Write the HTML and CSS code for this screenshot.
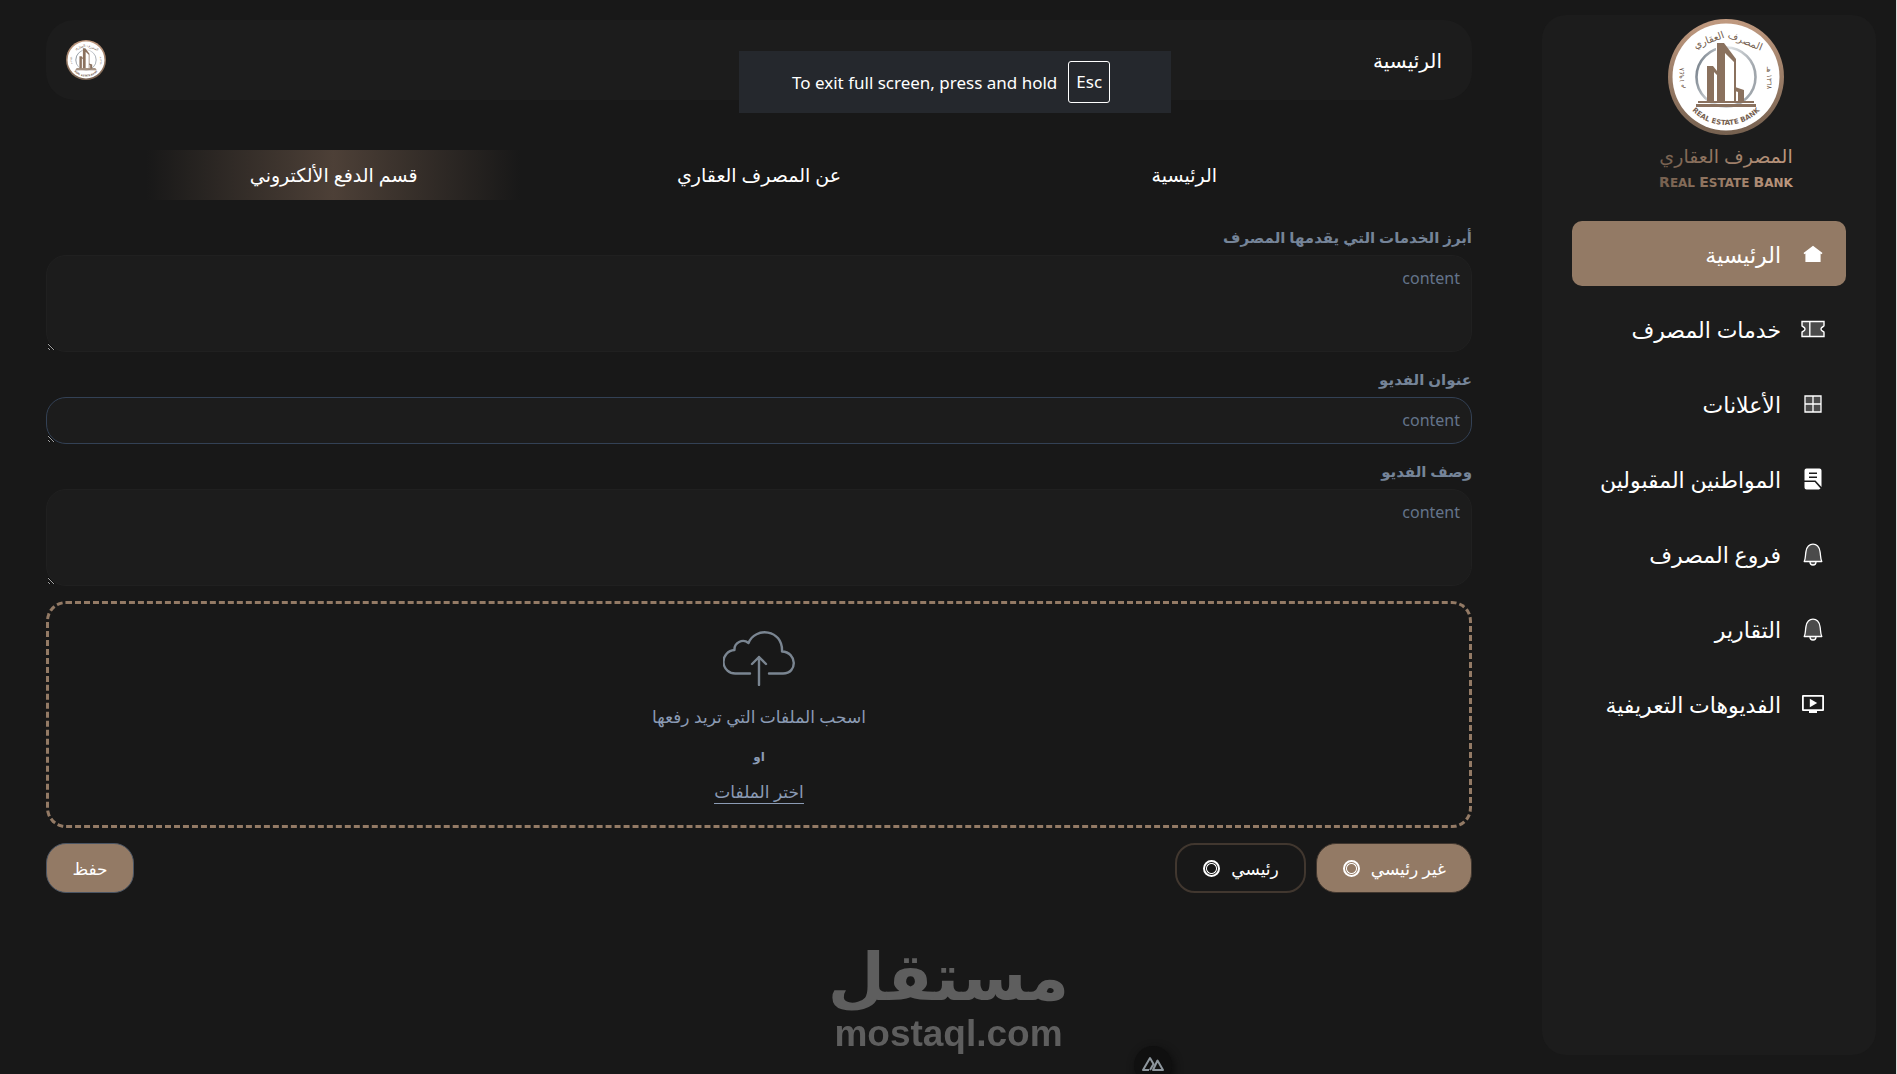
FILE: index.html
```html
<!DOCTYPE html>
<html lang="ar" dir="rtl">
<head>
    <meta charset="UTF-8">
    <meta name="viewport" content="width=device-width, initial-scale=1.0">
    <title>المصرف العقاري</title>
    <link rel="stylesheet" href="styles.css">
</head>
<body>

    <div class="layout">
        <!-- Sidebar -->
        <aside class="sidebar">
            <svg class="logo" viewBox="0 0 140 180" direction="ltr" role="img" aria-label="Real Estate Bank">
                <defs>
                    <linearGradient id="bronze" x1="0" y1="0" x2="0" y2="1">
                        <stop offset="0" stop-color="#c19a80"/>
                        <stop offset="1" stop-color="#75604f"/>
                    </linearGradient>
                    <linearGradient id="bronze-text" x1="0" y1="0" x2="1" y2="0">
                        <stop offset="0" stop-color="#75604f"/>
                        <stop offset="1" stop-color="#c09a80"/>
                    </linearGradient>
                    <linearGradient id="silver" x1="0" y1="0" x2="1" y2="0.3">
                        <stop offset="0" stop-color="#66717c"/>
                        <stop offset="0.5" stop-color="#dfe2e5"/>
                        <stop offset="1" stop-color="#a0a6ac"/>
                    </linearGradient>
                    <path id="seal-bottom" d="M27 82 A47 47 0 0 0 113 82"/>
                    <g id="seal">
                        <circle cx="70" cy="62" r="58" fill="url(#bronze)"/>
                        <circle cx="70" cy="62" r="53.5" fill="#fff"/>
                        <circle cx="70" cy="62" r="29.5" fill="none" stroke="url(#silver)" stroke-width="2.6"/>
                        <path d="M60 29h8v56h-8z" fill="#fff"/>
                        <path d="M61 28h7l12 16v42h-2V47l-9-9v48h-8z" fill="#8a715e"/>
                        <path d="M51 51h6l4 5v4l-3-3v29h-7zM79 72l9 3v11h-6V77l-3-1z" fill="#8a715e"/>
                        <path d="M42 86h56v2H42zM40 89h60v3H40z" fill="#8a715e"/>
                        <g fill="#75604f" text-anchor="middle">
                            <text class="seal-arabic" x="88" y="29" transform="rotate(22 88 29)">المصرف</text>
                            <text class="seal-arabic" x="54" y="28" transform="rotate(-20 54 28)">العقاري</text>
                            <text class="seal-year" transform="translate(28 63) rotate(-90)">١٩٤٨ م</text>
                            <text class="seal-year" transform="translate(111 63) rotate(90)">١٣٦٨ هـ</text>
                            <text class="seal-latin"><textPath href="#seal-bottom" startOffset="50%">REAL ESTATE BANK</textPath></text>
                        </g>
                    </g>
                </defs>
                <use href="#seal"/>
                <text class="logo-arabic" x="70" y="148" text-anchor="middle" fill="url(#bronze-text)">المصرف العقاري</text>
                <text class="logo-latin" x="70" y="172" text-anchor="middle" fill="url(#bronze-text)"><tspan class="cap">R</tspan>EAL <tspan class="cap">E</tspan>STATE <tspan class="cap">B</tspan>ANK</text>
            </svg>

            <nav class="menu">
                <a href="#" class="menu-item active">
                    <svg viewBox="0 0 24 24" fill="currentColor"><path d="M12 3.800 2.500 11l1 1.200.9-.6V20h15.200v-8.400l.9.6 1-1.200z"/></svg>
                    <span>الرئيسية</span>
                </a>
                <a href="#" class="menu-item">
                    <svg viewBox="0 0 24 24" fill="#4b4b4b" stroke="currentColor" stroke-width="1.400"><path d="M1 4.500h22v4a1 1 0 0 1-.8 1c-3 1.500-3 3.500 0 5a1 1 0 0 1 .8 1v4H1v-4a1 1 0 0 1 .8-1c3-1.500 3-3.500 0-5a1 1 0 0 1-.8-1z"/><path d="M8.800 4.500v15"/></svg>
                    <span>خدمات المصرف</span>
                </a>
                <a href="#" class="menu-item">
                    <svg viewBox="0 0 24 24" fill="#4b4b4b" stroke="currentColor" stroke-width="1.300"><path d="M4 4h16v16H4zM12 4v16M4 12h16"/></svg>
                    <span>الأعلانات</span>
                </a>
                <a href="#" class="menu-item">
                    <svg viewBox="0 0 24 24" fill="currentColor"><path fill-rule="evenodd" d="M3.500 3.500A2 2 0 0 1 5.500 1.500h13a2 2 0 0 1 2 2V20l-6-6.500h-11zM8 5.500V7h8V5.500zM8 9.500V11h8V9.500z"/><path d="M3.500 15h10.300l5.700 6.500-1.500 1H5.500a2 2 0 0 1-2-2z"/></svg>
                    <span>المواطنين المقبولين</span>
                </a>
                <a href="#" class="menu-item">
                    <svg viewBox="0 0 24 24" fill="#4b4b4b" stroke="currentColor" stroke-width="1.300" stroke-linejoin="round"><path d="M9 20a3 3 0 0 0 6 0"/><path d="M3.200 19.500c1.500-2.500 1-6 1.800-10 .8-4.500 3.500-7.300 7-7.300s6.200 2.800 7 7.300c.8 4 .3 7.500 1.800 10z"/></svg>
                    <span>فروع المصرف</span>
                </a>
                <a href="#" class="menu-item">
                    <svg viewBox="0 0 24 24" fill="#4b4b4b" stroke="currentColor" stroke-width="1.300" stroke-linejoin="round"><path d="M9 20a3 3 0 0 0 6 0"/><path d="M3.200 19.500c1.500-2.500 1-6 1.800-10 .8-4.500 3.500-7.300 7-7.300s6.200 2.800 7 7.300c.8 4 .3 7.500 1.800 10z"/></svg>
                    <span>التقارير</span>
                </a>
                <a href="#" class="menu-item">
                    <svg viewBox="0 0 24 24" fill="currentColor"><path fill-rule="evenodd" d="M2 3h20a1 1 0 0 1 1 1v14a1 1 0 0 1-1 1h-6v2H8v-2H2a1 1 0 0 1-1-1V4a1 1 0 0 1 1-1zm.800 1.800v12.400h18.400V4.800z"/><path d="m8.800 6.800 7.400 4.200-7.400 4.200z"/></svg>
                    <span>الفديوهات التعريفية</span>
                </a>
            </nav>
        </aside>

        <!-- Page content -->
        <main class="content">
            <header class="topbar">
                <h1>الرئيسية</h1>
                <a href="#" class="avatar" aria-label="الحساب">
                    <svg viewBox="12 4 116 116"><use href="#seal"/></svg>
                </a>
            </header>

            <div class="tabs">
                <button type="button" class="tab">الرئيسية</button>
                <button type="button" class="tab">عن المصرف العقاري</button>
                <button type="button" class="tab active">قسم الدفع الألكتروني</button>
            </div>

            <form class="form">
                <div class="field">
                    <label for="services">أبرز الخدمات التي يقدمها المصرف</label>
                    <textarea id="services" rows="3" placeholder="content"></textarea>
                </div>
                <div class="field">
                    <label for="video-title">عنوان الفديو</label>
                    <textarea id="video-title" class="single" rows="1" placeholder="content"></textarea>
                </div>
                <div class="field">
                    <label for="video-desc">وصف الفديو</label>
                    <textarea id="video-desc" rows="3" placeholder="content"></textarea>
                </div>

                <div class="dropzone">
                    <svg class="cloud" viewBox="0 0 72 56" fill="none" stroke="#7a8591" stroke-width="2.400" stroke-linecap="round" stroke-linejoin="round">
                        <path d="M27 43.500H13A11.500 11.500 0 0 1 11.500 20C11 13 19.500 8 25.500 13 32-3.500 60-1 59 21.500 74 22 75 43.500 60 43.500H46"/>
                        <path d="M36 55V27M29 34l7-7 7 7"/>
                    </svg>
                    <p>اسحب الملفات التي تريد رفعها</p>
                    <small>او</small>
                    <a href="#">اختر الملفات</a>
                </div>

                <div class="actions">
                    <label class="choice selected">غير رئيسي <input type="radio" name="kind" checked></label>
                    <label class="choice">رئيسي <input type="radio" name="kind"></label>
                    <button type="button" class="save">حفظ</button>
                </div>
            </form>
        </main>
    </div>

    <!-- Overlays -->
    <div class="fullscreen-hint" dir="ltr">To exit full screen, press and hold <kbd>Esc</kbd></div>

    <div class="watermark" dir="ltr">
        <span class="watermark-arabic" lang="ar">مستقل</span>
        <span class="watermark-latin">mostaql.com</span>
    </div>

    <button type="button" class="devtools" aria-label="Nuxt DevTools">
        <svg viewBox="0 0 24 16" fill="none" stroke="#8e979e" stroke-width="2" stroke-linejoin="round"><path d="M8 14H2L9 2l3.500 6L9 14M12 14h10l-5.500-9.500z"/></svg>
    </button>

</body>
</html>
```
FILE: styles.css
```css
/* General styles */
* {
    box-sizing: border-box;
}

body {
    margin: 0;
    height: 100vh;
    overflow: hidden;
    border-right: 1px solid #dcdcdc;
    background: #181818;
    color: #fff;
    font-family: "Noto Sans", "DejaVu Sans", sans-serif;
    font-size: 16px;
}

button,
textarea {
    font-family: inherit;
}

.layout {
    display: flex;
    gap: 70px;
    padding: 15px 20px 19px 46px;
    min-height: 100vh;
}

/* Sidebar */
.sidebar {
    flex: 0 0 334px;
    background: #1c1c1c;
    border-radius: 24px;
    padding: 0 30px;
}

.logo {
    display: block;
    width: 140px;
    height: 180px;
    margin: 0 50px 26px 0;
    overflow: visible;
}

.logo-arabic {
    font-size: 19px;
}

.logo-latin {
    font-family: "DejaVu Sans", sans-serif;
    font-size: 12px;
    font-weight: bold;
}

.logo-latin .cap {
    font-size: 14px;
}

.seal-arabic {
    font-size: 10px;
}

.seal-year {
    font-size: 7px;
}

.seal-latin {
    font-family: "DejaVu Sans", sans-serif;
    font-size: 7px;
    font-weight: bold;
}

.menu {
    display: flex;
    flex-direction: column;
    gap: 10px;
}

.menu-item {
    display: flex;
    align-items: center;
    gap: 20px;
    height: 65px;
    padding: 0 21px;
    border-radius: 10px;
    color: #fff;
    font-size: 22px;
    white-space: nowrap;
    text-decoration: none;
}

.menu-item svg {
    flex: none;
    width: 24px;
    height: 24px;
}

.menu-item.active {
    background: #937a65;
}

/* Header */
.content {
    flex: 1;
    min-width: 0;
    padding-top: 5px;
}

.topbar {
    display: flex;
    align-items: center;
    justify-content: space-between;
    height: 80px;
    padding: 0 30px 0 20px;
    border-radius: 28px;
    background: #1c1c1c;
}

.topbar h1 {
    margin: 0;
    font-size: 20px;
    font-weight: normal;
}

.avatar,
.avatar svg {
    display: block;
    width: 40px;
    height: 40px;
}

/* Tabs */
.tabs {
    display: grid;
    grid-template-columns: repeat(3, 1fr);
    margin: 50px 75px 0;
}

.tab {
    height: 50px;
    border: 0;
    background: none;
    color: #fff;
    font-size: 19px;
}

.tab.active {
    background: linear-gradient(90deg, transparent 6%, #4d4037 50%, transparent 94%);
}

/* Form */
.form {
    display: flex;
    flex-direction: column;
    gap: 15px;
    margin-top: 25px;
}

.field label {
    display: block;
    height: 30px;
    line-height: 24px;
    color: #758498;
    font-size: 15px;
    font-weight: bold;
}

.field textarea {
    display: block;
    width: 100%;
    height: 97px;
    padding: 11px;
    border: 1px solid #202020;
    border-radius: 20px;
    background: #1c1c1c;
    color: #fff;
    font-size: 16px;
    line-height: 22px;
}

.field textarea.single {
    height: 47px;
    border-color: #334155;
    overflow: hidden;
}

.field textarea::placeholder {
    color: #64748b;
}

.dropzone {
    display: flex;
    flex-direction: column;
    align-items: center;
    height: 227px;
    padding-top: 26px;
    border: 3px dashed #937a65;
    border-radius: 20px;
    color: #8b9bb4;
    font-size: 17px;
    line-height: 24px;
}

.cloud {
    width: 72px;
    height: 56px;
}

.dropzone p {
    margin: 19px 0 18px;
}

.dropzone small {
    margin-bottom: 14px;
    font-size: 12px;
    font-weight: bold;
    line-height: 20px;
}

.dropzone a {
    border-bottom: 1px solid #8b9bb4;
    color: inherit;
    line-height: 22px;
    text-decoration: none;
}

.actions {
    display: flex;
    gap: 10px;
}

.choice {
    display: flex;
    align-items: center;
    gap: 11px;
    height: 50px;
    padding: 0 25px;
    border: 2px solid #41372f;
    border-radius: 20px;
    font-size: 17px;
}

.choice.selected {
    border-width: 1px;
    background: #937a65;
}

.choice input {
    appearance: none;
    width: 17px;
    height: 17px;
    margin: 0 0 0 1px;
    border: 2px solid #fff;
    border-radius: 50%;
    background: radial-gradient(closest-side, transparent 4px, #fff 5px, transparent 6px);
}

.save {
    min-width: 88px;
    height: 50px;
    margin-right: auto;
    border: 1px solid #4b5563;
    border-radius: 20px;
    background: #937a65;
    color: #fff;
    font-size: 17px;
}

/* Overlays */
.fullscreen-hint {
    position: fixed;
    top: 51px;
    left: 739px;
    display: flex;
    align-items: center;
    gap: 11px;
    min-width: 432px;
    height: 62px;
    padding: 0 58px 0 53px;
    background: #25282d;
    font-size: 17px;
    white-space: nowrap;
}

.fullscreen-hint kbd {
    padding: 7px;
    border: 1px solid #fff;
    border-radius: 3px;
    font-family: inherit;
    line-height: 26px;
}

.watermark {
    position: fixed;
    bottom: 17px;
    left: 50%;
    display: flex;
    flex-direction: column;
    align-items: center;
    transform: translateX(-50%);
    color: #5e5e5e;
    font-weight: bold;
}

.watermark-arabic {
    font-family: "DejaVu Sans", sans-serif;
    font-size: 66px;
    line-height: 66px;
}

.watermark-latin {
    font-family: "Liberation Sans", sans-serif;
    font-size: 37px;
    line-height: 46px;
}

.devtools {
    position: fixed;
    bottom: -10px;
    left: 1134px;
    display: flex;
    justify-content: center;
    width: 38px;
    height: 38px;
    padding: 10px 0 0;
    border: 0;
    border-radius: 50%;
    background: #101010;
    box-shadow: 2px 3px 8px #0c0c0c;
}

.devtools svg {
    width: 24px;
    height: 16px;
}
```
